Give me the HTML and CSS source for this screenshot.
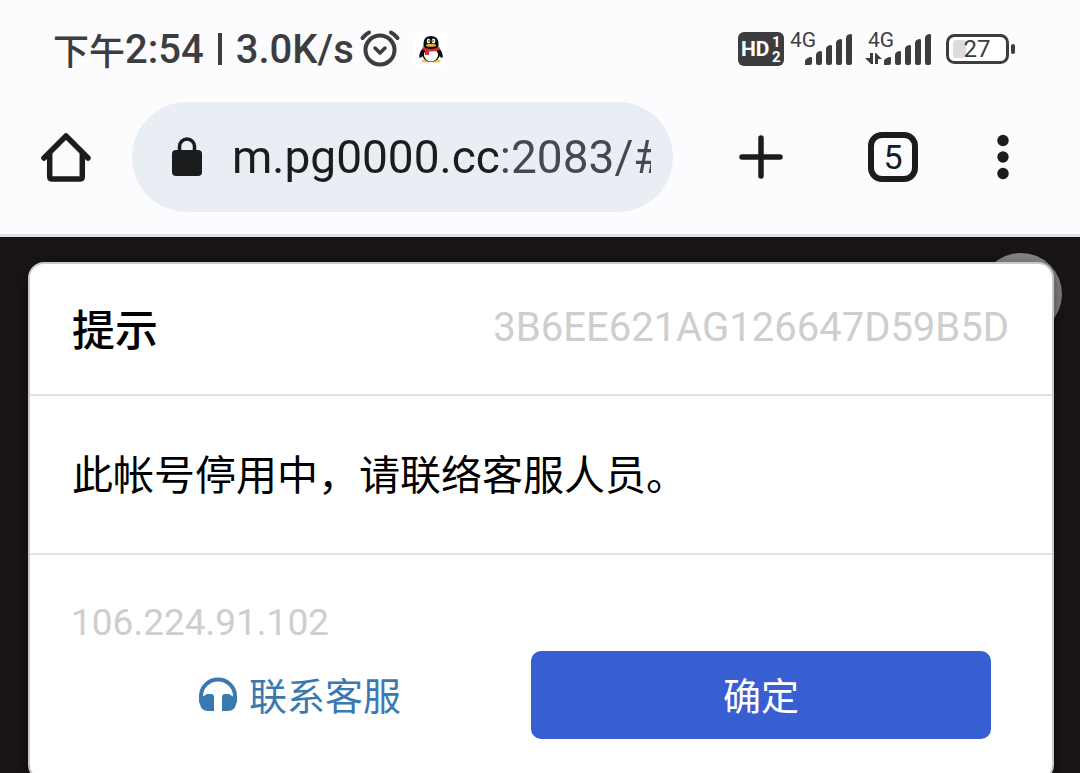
FILE: index.html
```html
<!DOCTYPE html>
<html lang="zh-CN">
<head>
    <meta charset="UTF-8">
    <meta name="viewport" content="width=device-width, initial-scale=1.0">
    <title>提示</title>
    <link rel="stylesheet" href="styles.css">
</head>
<body>
    <header class="browser">
        <div class="status-bar">
            <div class="status-left">
                <span class="status-time"><span class="period">下午</span>2:54</span>
                <span class="divider"></span>
                <span>3.0K/s</span>
                <svg class="alarm" width="40" height="38" viewBox="0 0 40 38" fill="none" stroke="#3c3d3f" stroke-width="4" stroke-linecap="round" stroke-linejoin="round">
                    <circle cx="20" cy="20" r="14.5"/>
                    <path d="M2.500 8Q5 4.500 9 2.500M31 2.500Q35 4.500 37.500 8"/>
                    <path d="M15 18l5 5 5-5" stroke-width="3.500"/>
                </svg>
                <svg class="penguin" width="34" height="34" viewBox="0 0 34 34">
                    <rect width="34" height="34" rx="5" fill="#fff"/>
                    <ellipse cx="12" cy="29" rx="4.500" ry="1.500" fill="#e8c35b"/>
                    <ellipse cx="22" cy="29" rx="4.500" ry="1.500" fill="#e8c35b"/>
                    <path d="M9 16Q4.500 21 5.500 26Q8 25.500 9.500 23ZM25 16Q29.500 21 28.500 26Q26 25.500 24.500 23Z" fill="#0a0a0a"/>
                    <ellipse cx="17" cy="21.500" rx="9" ry="8.500" fill="#0a0a0a"/>
                    <ellipse cx="17" cy="23" rx="7" ry="6.500" fill="#fff"/>
                    <path d="M9.500 15V11Q10 4 17 4T24.500 11V15Q17 20 9.500 15Z" fill="#0a0a0a"/>
                    <ellipse cx="14.500" cy="9" rx="1.800" ry="2.500" fill="#fff"/>
                    <ellipse cx="19.500" cy="9" rx="1.800" ry="2.500" fill="#fff"/>
                    <circle cx="15" cy="9" r="0.800"/>
                    <circle cx="19" cy="9" r="0.800"/>
                    <ellipse cx="17" cy="13.300" rx="5" ry="1.500" fill="#efb530"/>
                    <path d="M8.500 15Q17 19 25.500 15V18Q20 20 15 19.500V23H11V18.800Q9 18.500 8.500 17.500Z" fill="#d62d30"/>
                </svg>
            </div>
            <div class="status-right">
                <svg width="46" height="34" viewBox="0 0 46 34">
                    <rect width="46" height="34" rx="6" fill="#3c3d3f"/>
                    <text class="hd" x="3" y="24">HD</text>
                    <text class="sim" x="34" y="15">1</text>
                    <text class="sim" x="34" y="30">2</text>
                </svg>
                <svg class="signal" width="63" height="34" viewBox="0 0 63 34" fill="#3c3d3f">
                    <text class="net" x="0" y="15">4G</text>
                    <path d="M15 33v-4q0-2 5-4 2-.5 2 1v5q0 2-2 2zM26 31v-8q0-3 4-4 2 0 2 1v11q0 2-2 2h-2q-2 0-2-2zM36 31V17q0-3 4-4 2 0 2 1v17q0 2-2 2h-2q-2 0-2-2zM46 31V11q0-3 4-4 2 0 2 1v23q0 2-2 2h-2q-2 0-2-2zM56 31V6q0-3 4-4 2 0 2 1v28q0 2-2 2h-2q-2 0-2-2z"/>
                </svg>
                <svg class="signal" width="68" height="34" viewBox="0 0 68 34" fill="#3c3d3f">
                    <text class="net" x="3" y="15">4G</text>
                    <path d="M5 21h3v11H6l-6-6h5zM10 32V21h1l6 6h-4v5z"/>
                    <path d="M19 33v-4q0-2 5-4 2-.5 2 1v5q0 2-2 2zM30 31v-8q0-3 4-4 2 0 2 1v11q0 2-2 2h-2q-2 0-2-2zM40 31V17q0-3 4-4 2 0 2 1v17q0 2-2 2h-2q-2 0-2-2zM50 31V11q0-3 4-4 2 0 2 1v23q0 2-2 2h-2q-2 0-2-2zM60 31V6q0-3 4-4 2 0 2 1v28q0 2-2 2h-2q-2 0-2-2z"/>
                </svg>
                <svg class="battery" width="70" height="30" viewBox="0 0 70 30">
                    <rect x="1.500" y="1.500" width="60" height="27" rx="7" fill="#fff" stroke="#3c3d3f" stroke-width="3"/>
                    <rect x="7" y="6" width="13" height="18" rx="3" fill="#dcdcdd"/>
                    <rect x="65" y="10" width="4" height="10" rx="2" fill="#3c3d3f"/>
                    <text class="level" x="31" y="23" text-anchor="middle">27</text>
                </svg>
            </div>
        </div>

        <div class="toolbar">
            <button class="home" type="button" aria-label="主页">
                <svg width="52" height="52" viewBox="0 0 52 52" fill="none" stroke="#1b1c1e" stroke-width="5.500" stroke-linecap="round" stroke-linejoin="round">
                    <path d="M4 27L26 5l22 22"/>
                    <path d="M9.700 23v22.500Q9.700 48 12.200 48H39.800Q42.300 48 42.300 45.500V23"/>
                </svg>
            </button>
            <label class="address">
                <svg width="30" height="40" viewBox="0 0 30 40">
                    <rect y="13" width="30" height="26" rx="4" fill="#1b1c1e"/>
                    <path d="M7.500 15V9.500a7.500 7.500 0 0 1 15 0V15" fill="none" stroke="#1b1c1e" stroke-width="3.500"/>
                </svg>
                <input class="url" type="text" value="m.pg0000.cc:2083/#/" aria-label="网址">
            </label>
            <div class="actions">
                <button type="button" aria-label="新标签页">
                    <svg width="44" height="44" viewBox="0 0 44 44" stroke="#1b1c1e" stroke-width="5.500" stroke-linecap="round">
                        <path d="M22 3v38M3 22h38"/>
                    </svg>
                </button>
                <button type="button" aria-label="标签页"><span class="tab-count">5</span></button>
                <button class="menu" type="button" aria-label="菜单">
                    <svg width="12" height="46" viewBox="0 0 12 46" fill="#1b1c1e">
                        <circle cx="6" cy="6.500" r="5.700"/>
                        <circle cx="6" cy="23" r="5.700"/>
                        <circle cx="6" cy="39.500" r="5.700"/>
                    </svg>
                </button>
            </div>
        </div>
    </header>

    <main class="page">
        <span class="float-ball"></span>
        <section class="dialog" role="dialog" aria-labelledby="dialog-title">
            <div class="dialog-header">
                <h1 id="dialog-title">提示</h1>
                <span class="code">3B6EE621AG126647D59B5D</span>
            </div>
            <p class="message">此帐号停用中，请联络客服人员。</p>
            <div class="dialog-footer">
                <div class="ip">106.224.91.102</div>
                <a class="service" href="#">
                    <svg width="40" height="36" viewBox="0 0 40 36">
                        <path d="M3 24V20a17 16.500 0 0 1 34 0v4" fill="none" stroke="#3a79b0" stroke-width="4"/>
                        <path d="M9 18h4q3 0 3 3v14H10Q3 35 2 28L1 26V22Q5 21 9 18zM31 18h-4q-3 0-3 3v14h6q7 0 8-7l1-2v-4q-4-1-8-4z" fill="#3a79b0"/>
                    </svg>
                    联系客服
                </a>
                <button class="confirm" type="button">确定</button>
            </div>
        </section>
    </main>
</body>
</html>
```
FILE: styles.css
```css
:root {
    --bar-bg: #fcfcff;
    --icon: #1b1c1e;
    --status: #3c3d3f;
    --muted: #cecece;
    --line: #e2e2e2;
    --primary: #375fd1;
    --link: #3a79b0;
}

* {
    box-sizing: border-box;
}

body {
    margin: 0;
    height: 100vh;
    overflow: hidden;
    background: #191514;
    font-family: Roboto, "Noto Sans CJK SC", sans-serif;
    color: #000;
}

button {
    display: flex;
    align-items: center;
    justify-content: center;
    padding: 0;
    border: none;
    background: none;
    font-family: inherit;
    cursor: pointer;
}

svg {
    display: block;
    flex-shrink: 0;
    overflow: visible;
}

.browser {
    background: var(--bar-bg);
    border-bottom: 3px solid #dfe1e8;
}

.status-bar {
    display: flex;
    justify-content: space-between;
    height: 98px;
    padding: 0 64px 0 53px;
    color: var(--status);
    font-size: 40px;
    font-weight: 500;
}

.status-left,
.status-right {
    display: flex;
    align-items: center;
}

.status-time {
    display: flex;
    align-items: center;
}

.period {
    font-size: 36px;
}

.divider {
    width: 4px;
    height: 32px;
    margin: 0 14px;
    background: var(--status);
}

.alarm {
    margin-left: 6px;
}

.penguin {
    margin-left: 14px;
}

.signal {
    margin-left: 6px;
}

.signal + .signal {
    margin-left: 12px;
}

.battery {
    margin-left: 13px;
}

.hd {
    fill: #fff;
    font-size: 21px;
    font-weight: 700;
}

.sim {
    fill: #fff;
    font-size: 15px;
    font-weight: 700;
}

.net {
    font-size: 21px;
    font-weight: 400;
}

.level {
    fill: var(--status);
    font-size: 24px;
    font-weight: 400;
}

.toolbar {
    display: flex;
    align-items: center;
    padding: 4px 33px 22px 40px;
}

.address {
    display: flex;
    flex: 1;
    align-items: center;
    gap: 30px;
    min-width: 0;
    height: 110px;
    margin: 0 22px 0 40px;
    padding: 0 22px 0 40px;
    border-radius: 55px;
    background: #e9eef5;
}

/* host part is darker than the port and path */
.url {
    flex: 1;
    min-width: 0;
    padding: 0;
    border: none;
    outline: none;
    background: linear-gradient(90deg, #1b1c1e 268px, #454850 268px);
    -webkit-background-clip: text;
    background-clip: text;
    color: transparent;
    font-family: inherit;
    font-size: 46px;
}

.actions {
    display: flex;
}

.actions button {
    width: 132px;
    height: 88px;
}

.actions .menu {
    width: 88px;
}

.tab-count {
    width: 50px;
    height: 50px;
    border: 6px solid var(--icon);
    border-radius: 14px;
    color: var(--icon);
    font-size: 34px;
    line-height: 38px;
}

.page {
    position: relative;
    padding: 25px 26px 0 28px;
}

.float-ball {
    position: absolute;
    top: 16px;
    right: 18px;
    width: 82px;
    height: 82px;
    border-radius: 50%;
    background: #858585;
}

.dialog {
    position: relative;
    border: 2px solid #c9c9c9;
    border-radius: 16px;
    background: #fff;
    box-shadow: 0 6px 18px rgba(0, 0, 0, 0.5);
}

.dialog-header {
    display: flex;
    align-items: center;
    justify-content: space-between;
    height: 132px;
    padding: 0 43px 4px 42px;
    border-bottom: 2px solid var(--line);
}

.dialog-header h1 {
    margin: 0;
    font-size: 43px;
    font-weight: 500;
}

.code {
    color: var(--muted);
    font-size: 40px;
}

.message {
    margin: 0;
    padding: 50px 42px 46px;
    border-bottom: 2px solid var(--line);
    font-size: 41px;
    line-height: 61px;
}

.dialog-footer {
    display: grid;
    grid-template-columns: 1fr 1fr;
    padding: 40px 61px 40px 41px;
}

.ip {
    grid-column: 1 / -1;
    color: var(--muted);
    font-size: 37px;
    line-height: 56px;
}

.service {
    display: flex;
    align-items: center;
    justify-content: center;
    gap: 11px;
    padding: 0 3px 3px 0;
    color: var(--link);
    font-size: 38px;
    text-decoration: none;
}

.confirm {
    height: 88px;
    padding-bottom: 3px;
    border-radius: 10px;
    background: var(--primary);
    color: #fff;
    font-size: 38px;
}
```
